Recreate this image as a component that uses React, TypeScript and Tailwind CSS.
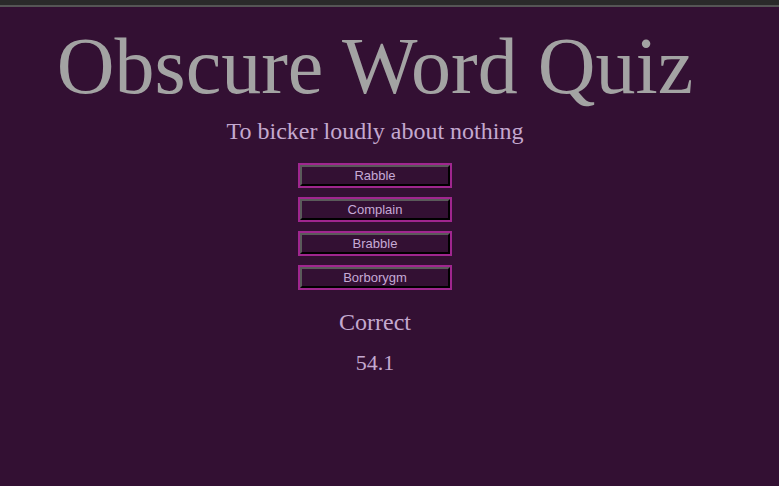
const OPTIONS = ['Rabble', 'Complain', 'Brabble', 'Borborygm']

export default function App() {
  return (
    <div className="flex h-[486px] w-[779px] flex-col bg-[#331033] font-['Liberation_Serif',serif]">
      <div className="h-[7px] shrink-0 border-b-2 border-[#555555] bg-[#2a2a2a]" />
      <div className="flex w-[750px] flex-col items-center">
        <h1 className="mt-[13px] text-[80px] leading-[92px] text-[#a3a3a3]">Obscure Word Quiz</h1>
        <p className="mt-[5px] text-[24px] leading-[28px] text-[#c4a9cf]">To bicker loudly about nothing</p>
        <div className="mt-[18px] flex flex-col gap-[9px]">
          {OPTIONS.map((o) => (
            <div key={o} className="border-2 border-[#a0268f]">
              <button
                type="button"
                className="block h-[21px] w-[150px] border-2 border-t-[#5a5a5a] border-l-[#5a5a5a] border-r-black border-b-black bg-[#331033] font-['Liberation_Sans',sans-serif] text-[13px] leading-[15px] text-[#c6aad6]"
              >
                {o}
              </button>
            </div>
          ))}
        </div>
        <p className="mt-[18px] text-[24px] leading-[28px] text-[#c4a9cf]">Correct</p>
        <p className="mt-[14px] text-[22px] leading-[26px] text-[#c4a9cf]">54.1</p>
      </div>
    </div>
  )
}
